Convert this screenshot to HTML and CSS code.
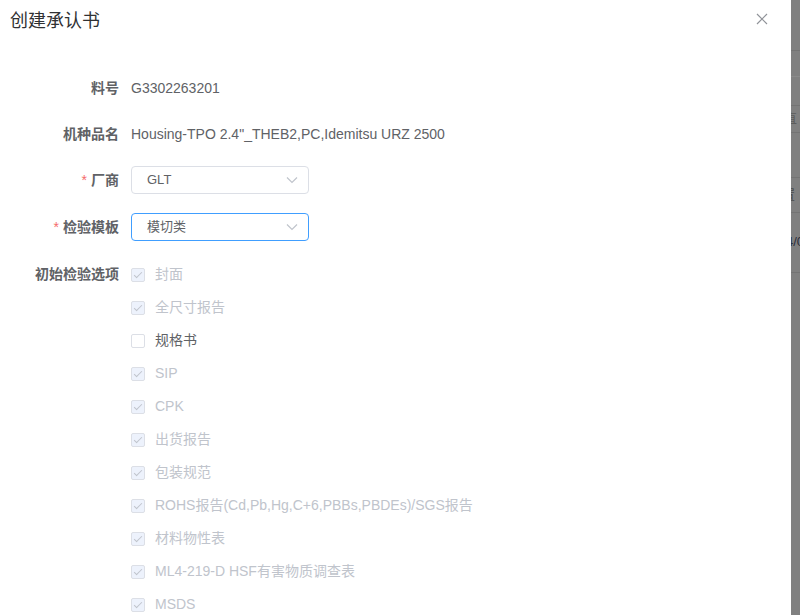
FILE: index.html
```html
<!DOCTYPE html>
<html lang="zh-CN">
<head>
  <meta charset="UTF-8" />
  <title>创建承认书</title>
  <link rel="stylesheet" href="styles.css">
</head>
<body>
  <div class="dialog">
    <div class="dialog-header">
      <span class="dialog-title">创建承认书</span>
      <button class="close-btn" aria-label="关闭">
        <svg width="12" height="12" viewBox="0 0 12 12"><path d="M1 1L11 11M11 1L1 11" stroke="#909399" stroke-width="1.2" fill="none"/></svg>
      </button>
    </div>

    <form class="form">
      <div class="form-item">
        <label class="form-label">料号</label>
        <div class="form-content">G3302263201</div>
      </div>
      <div class="form-item">
        <label class="form-label">机种品名</label>
        <div class="form-content">Housing-TPO 2.4"_THEB2,PC,Idemitsu URZ 2500</div>
      </div>
      <div class="form-item select-item">
        <label class="form-label required">厂商</label>
        <div class="form-content">
          <div class="select">
            <span>GLT</span>
            <svg class="arrow" width="12" height="8" viewBox="0 0 12 8"><path d="M1 1.5L6 6.5L11 1.5" stroke="#c0c4cc" stroke-width="1.2" fill="none"/></svg>
          </div>
        </div>
      </div>
      <div class="form-item select-item">
        <label class="form-label required">检验模板</label>
        <div class="form-content">
          <div class="select focus">
            <span>模切类</span>
            <svg class="arrow" width="12" height="8" viewBox="0 0 12 8"><path d="M1 1.5L6 6.5L11 1.5" stroke="#c0c4cc" stroke-width="1.2" fill="none"/></svg>
          </div>
        </div>
      </div>
      <div class="form-item">
        <label class="form-label">初始检验选项</label>
        <div class="form-content checks">
          <div class="check disabled"><span class="box"></span>封面</div>
          <div class="check disabled"><span class="box"></span>全尺寸报告</div>
          <div class="check"><span class="box"></span>规格书</div>
          <div class="check disabled"><span class="box"></span>SIP</div>
          <div class="check disabled"><span class="box"></span>CPK</div>
          <div class="check disabled"><span class="box"></span>出货报告</div>
          <div class="check disabled"><span class="box"></span>包装规范</div>
          <div class="check disabled"><span class="box"></span>ROHS报告(Cd,Pb,Hg,C+6,PBBs,PBDEs)/SGS报告</div>
          <div class="check disabled"><span class="box"></span>材料物性表</div>
          <div class="check disabled"><span class="box"></span>ML4-219-D HSF有害物质调查表</div>
          <div class="check disabled"><span class="box"></span>MSDS</div>
        </div>
      </div>
    </form>
  </div>

  <div class="backdrop">
    <div class="bg-row r1"></div>
    <div class="bg-row r2"></div>
    <div class="bg-row r3"></div>
    <div class="bg-row r4">直</div>
    <div class="bg-row r5"></div>
    <div class="bg-row r6">置</div>
    <div class="bg-row r7">4/0</div>
  </div>
</body>
</html>
```

FILE: styles.css
```css
html, body {
  margin: 0;
  height: 100%;
  overflow: hidden;
}

body {
  display: flex;
  font-family: "Liberation Sans", "Noto Sans CJK SC", sans-serif;
  font-size: 14px;
  color: #606266;
  background: #fff;
}

.dialog {
  width: 791px;
  flex: none;
  background: #fff;
}

.dialog-header {
  display: flex;
  justify-content: space-between;
  align-items: flex-start;
  padding: 9px 23px 0 10px;
  height: 65px;
}

.dialog-title {
  font-size: 18px;
  line-height: 24px;
  color: #303133;
}

.close-btn {
  border: none;
  background: none;
  padding: 0;
  margin-top: 4px;
  line-height: 0;
}

.form-item {
  display: flex;
  margin-bottom: 18px;
}

.select-item {
  margin-bottom: 19px;
}

.form-label {
  width: 119px;
  padding-right: 12px;
  text-align: right;
  line-height: 28px;
  font-weight: bold;
  color: #606266;
  flex: none;
}

.form-label.required::before {
  content: "*";
  color: #f56c6c;
  margin-right: 4px;
  font-weight: normal;
}

.form-content {
  line-height: 28px;
}

.select {
  box-sizing: border-box;
  width: 178px;
  height: 28px;
  border: 1px solid #dcdfe6;
  border-radius: 4px;
  padding: 0 10px 0 15px;
  display: flex;
  align-items: center;
  justify-content: space-between;
  font-size: 13px;
  line-height: 26px;
}

.select.focus {
  border-color: #409eff;
}

.checks {
  margin-top: -2px;
}

.check {
  display: flex;
  align-items: center;
  height: 33px;
  line-height: 33px;
  color: #606266;
}

.box {
  box-sizing: border-box;
  width: 14px;
  height: 14px;
  border: 1px solid #dcdfe6;
  border-radius: 2px;
  background: #fff;
  margin-right: 10px;
  position: relative;
}

.check.disabled {
  color: #c0c4cc;
}

.check.disabled .box {
  background: #edf2fc;
}

.check.disabled .box::after {
  content: "";
  position: absolute;
  left: 4px;
  top: 1px;
  width: 3px;
  height: 7px;
  border: 1px solid #c0c4cc;
  border-top: 0;
  border-left: 0;
  transform: rotate(45deg);
}

.backdrop {
  flex: 1;
  background: #808080;
  overflow: hidden;
  white-space: nowrap;
  color: #3a3a3a;
  font-size: 13px;
}

.bg-row {
  box-sizing: border-box;
  border-bottom: 1px solid #747474;
}

.r1 { height: 51px; }
.r2 { height: 26px; border-bottom-color: #8a8a8a; }
.r3 { height: 29px; }
.r4 { height: 27px; line-height: 26px; color: #5c5c5c; margin-left: -7px; }
.r5 { height: 45px; }
.r6 { height: 35px; line-height: 34px; color: #4a4a4a; margin-left: -9px; }
.r7 { height: 60px; line-height: 58px; color: #2c2c3a; margin-left: -5px; }
```
